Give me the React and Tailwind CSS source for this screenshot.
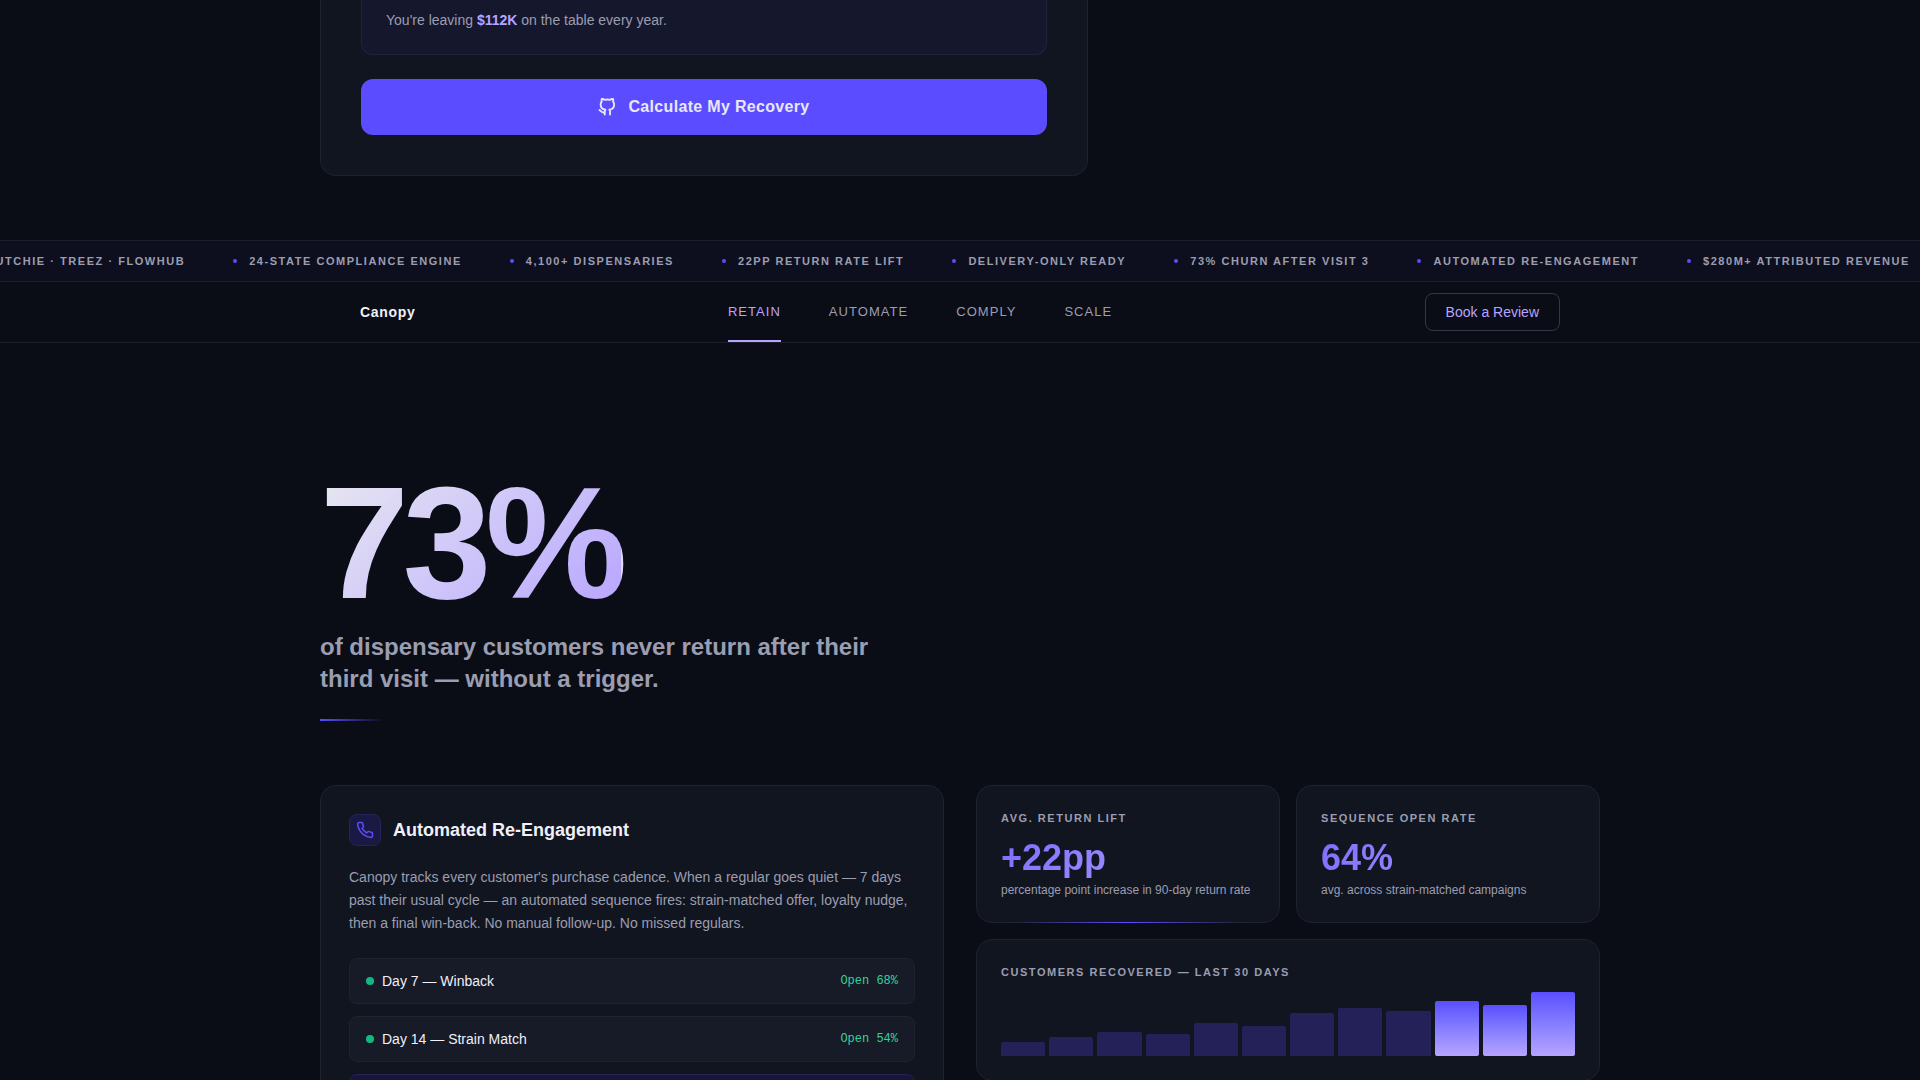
import React from "react";
import { FiGithub, FiPhone } from "react-icons/fi";

const TICKER = [
  "Dutchie · Treez · Flowhub",
  "24-State Compliance Engine",
  "4,100+ Dispensaries",
  "22pp Return Rate Lift",
  "Delivery-Only Ready",
  "73% Churn After Visit 3",
  "Automated Re-Engagement",
  "$280M+ Attributed Revenue",
];

const NAV_LINKS = ["Retain", "Automate", "Comply", "Scale"];

const SEQUENCE = [
  { label: "Day 7 — Winback", rate: "Open 68%" },
  { label: "Day 14 — Strain Match", rate: "Open 54%" },
  { label: "Day 21 — Final Offer", rate: "Open 41%", active: true },
];

const RECOVERED = [22, 30, 37, 34, 51, 47, 67, 75, 70, 86, 79, 100];

const StatLabel = ({ children }) => (
  <h4 className="mb-3 text-[11px] leading-4 font-bold uppercase tracking-[0.14em] text-[#9b9db1]">
    {children}
  </h4>
);

const StatCard = ({ label, value, note, accent }) => (
  <div className="relative rounded-2xl border border-[#1f222e] bg-[#111520] p-6">
    <StatLabel>{label}</StatLabel>
    <p className="bg-linear-135 from-[#7d6dff] to-[#b8a4ff] bg-clip-text text-4xl leading-10 font-bold text-transparent">
      {value}
    </p>
    <p className="mt-1 text-xs leading-4 text-[#9b9db1]">{note}</p>
    {accent && (
      <span className="absolute inset-x-8 -bottom-px h-px bg-gradient-to-r from-transparent via-[#5b4dff] to-transparent" />
    )}
  </div>
);

function RecoveryCard() {
  return (
    <section className="mx-auto max-w-[1280px]">
      <div className="max-w-3xl rounded-b-2xl border border-t-0 border-[#1f222e] bg-[#111520] px-10 pb-10">
        <div className="mb-6 rounded-b-xl border border-t-0 border-[#20233a] bg-[#15172c] px-6 pt-2.5 pb-6">
          <p className="text-sm text-[#9b9db1]">
            You're leaving <strong className="font-bold text-[#b8a4ff]">$112K</strong> on the table every year.
          </p>
        </div>
        <button
          type="button"
          className="flex h-14 w-full items-center justify-center gap-3 rounded-xl bg-[#5b4dff] text-base font-bold tracking-[0.02em] text-[#e8e8f4]"
        >
          <FiGithub size={18} strokeWidth={2.5} aria-hidden="true" />
          Calculate My Recovery
        </button>
      </div>
    </section>
  );
}

function Ticker() {
  return (
    <div className="mt-16 overflow-hidden border-y border-[#1c1f2b] bg-[#0e0f1e] py-3">
      <ul className="flex w-max -translate-x-[30px] gap-12">
        {TICKER.map((item) => (
          <li
            key={item}
            className="flex items-center gap-3 text-[11px] leading-4 font-bold uppercase tracking-[0.14em] whitespace-nowrap text-[#9b9db1]"
          >
            <span className="size-1 rounded-full bg-[#5b4dff]" />
            {item}
          </li>
        ))}
      </ul>
    </div>
  );
}

function Nav() {
  return (
    <header className="border-b border-[#1c1f2b]">
      <div className="mx-auto flex h-15 max-w-[1280px] items-center justify-between px-10">
        <a href="#top" className="text-sm font-bold tracking-[0.05em] text-[#f0f0f8]">
          Canopy
        </a>
        <nav className="flex gap-12 self-stretch">
          {NAV_LINKS.map((link, i) => (
            <a
              key={link}
              href={`#${link.toLowerCase()}`}
              className={`flex items-center border-y-2 border-t-transparent text-[13px] uppercase tracking-[0.08em] ${
                i === 0 ? "border-b-[#b8a4ff] text-[#b8a4ff]" : "border-b-transparent text-[#9b9db1]"
              }`}
            >
              {link}
            </a>
          ))}
        </nav>
        <button
          type="button"
          className="rounded-lg border border-[#343748] px-5 py-2 text-sm text-[#b8a4ff]"
        >
          Book a Review
        </button>
      </div>
    </header>
  );
}

function Retain() {
  return (
    <main id="retain" className="mx-auto max-w-[1280px] pt-32">
      <h1 className="inline-block bg-linear-135 from-[#e8e8f0] to-[#b8a4ff] bg-clip-text bg-origin-content pr-1 align-top text-[160px] leading-[144px] font-bold tracking-[-0.04em] text-transparent">
        73%
      </h1>
      <p className="mt-4 max-w-[560px] text-2xl leading-8 font-bold text-[#9b9db1]">
        of dispensary customers never return after their third visit — without a trigger.
      </p>
      <div className="mt-6 mb-16 h-0.5 w-16 bg-gradient-to-r from-[#5b4dff] to-transparent" />

      <div className="grid grid-cols-2 gap-8">
        <article className="rounded-2xl border border-[#1f222e] bg-[#111520] p-7">
          <div className="mb-5 flex items-center gap-3">
            <div className="flex size-8 items-center justify-center rounded-lg border border-[#262357] bg-[#1a1944] text-[#5b4dff]">
              <FiPhone size={18} aria-hidden="true" />
            </div>
            <h3 className="text-lg leading-6 font-bold text-[#f0f0f8]">Automated Re-Engagement</h3>
          </div>
          <p className="mb-6 text-sm leading-relaxed text-[#9b9db1]">
            Canopy tracks every customer's purchase cadence. When a regular goes quiet — 7 days past
            their usual cycle — an automated sequence fires: strain-matched offer, loyalty nudge, then
            a final win-back. No manual follow-up. No missed regulars.
          </p>
          <ul className="flex flex-col gap-3">
            {SEQUENCE.map((step) => (
              <li
                key={step.label}
                className={`flex items-center gap-2 rounded-lg border px-4 py-3 ${
                  step.active ? "border-[#262357] bg-[#171638]" : "border-[#20232f] bg-[#171a27]"
                }`}
              >
                <span className="size-2 rounded-full bg-[#10b981]" />
                <span className="text-sm text-[#f0f0f8]">{step.label}</span>
                <span className="ml-auto font-['Liberation_Mono',monospace] text-xs text-[#34d399]">
                  {step.rate}
                </span>
              </li>
            ))}
          </ul>
        </article>

        <div className="flex flex-col gap-4">
          <div className="grid grid-cols-2 gap-4">
            <StatCard
              label="Avg. Return Lift"
              value="+22pp"
              note="percentage point increase in 90-day return rate"
              accent
            />
            <StatCard
              label="Sequence Open Rate"
              value="64%"
              note="avg. across strain-matched campaigns"
            />
          </div>
          <div className="rounded-2xl border border-[#1f222e] bg-[#111520] p-6">
            <StatLabel>Customers Recovered — Last 30 Days</StatLabel>
            <div className="flex h-16 items-end gap-1">
              {RECOVERED.map((value, i) => (
                <div
                  key={i}
                  className={
                    i >= 9
                      ? "flex-1 rounded-xs bg-gradient-to-b from-[#5b4dff] to-[#b8a4ff]"
                      : "flex-1 rounded-t-xs bg-[#242159]"
                  }
                  style={{ height: `${value}%` }}
                />
              ))}
            </div>
          </div>
        </div>
      </div>
    </main>
  );
}

export default function App() {
  return (
    <div
      id="top"
      className="h-screen overflow-hidden bg-[#0a0d16] font-['Liberation_Sans',Arial,sans-serif] antialiased"
    >
      <RecoveryCard />
      <Ticker />
      <Nav />
      <Retain />
    </div>
  );
}
